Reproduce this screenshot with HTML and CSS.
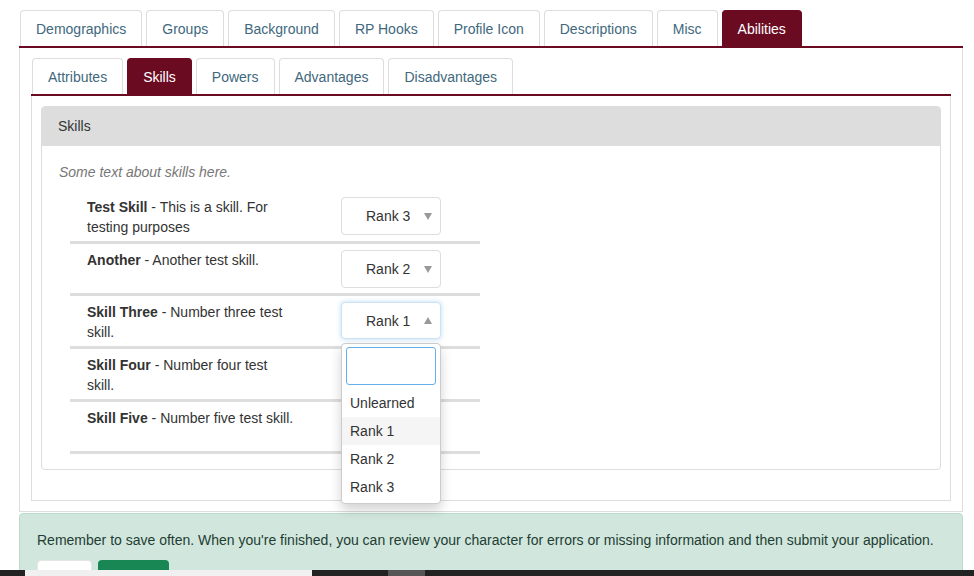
FILE: index.html
```html
<!DOCTYPE html>
<html>
<head>
<meta charset="utf-8">
<link rel="stylesheet" href="styles.css">
</head>
<body>
<div class="page">
  <ul class="tabs">
    <li class="tab">Demographics</li>
    <li class="tab">Groups</li>
    <li class="tab">Background</li>
    <li class="tab">RP Hooks</li>
    <li class="tab">Profile Icon</li>
    <li class="tab">Descriptions</li>
    <li class="tab">Misc</li>
    <li class="tab active">Abilities</li>
  </ul>
  <div class="outer-panel">
    <ul class="tabs">
      <li class="tab">Attributes</li>
      <li class="tab active">Skills</li>
      <li class="tab">Powers</li>
      <li class="tab">Advantages</li>
      <li class="tab">Disadvantages</li>
    </ul>
    <div class="inner-panel">
      <div class="card">
        <div class="card-head">Skills</div>
        <div class="card-body">
          <p class="intro">Some text about skills here.</p>
          <div class="skill-list">
            <div class="skill">
              <div class="label"><b>Test Skill</b> - This is a skill. For testing purposes</div>
              <div class="select"><span>Rank 3</span><i class="caret"></i></div>
            </div>
            <div class="skill">
              <div class="label"><b>Another</b> - Another test skill.</div>
              <div class="select"><span>Rank 2</span><i class="caret"></i></div>
            </div>
            <div class="skill">
              <div class="label"><b>Skill Three</b> - Number three test skill.</div>
              <div class="select-wrap">
                <div class="select focused"><span>Rank 1</span><i class="caret up"></i></div>
                <div class="dropdown">
                  <div class="search"></div>
                  <div class="opt">Unlearned</div>
                  <div class="opt hover">Rank 1</div>
                  <div class="opt">Rank 2</div>
                  <div class="opt">Rank 3</div>
                </div>
              </div>
            </div>
            <div class="skill">
              <div class="label"><b>Skill Four</b> - Number four test skill.</div>
              <div class="select"><span>Rank 1</span><i class="caret"></i></div>
            </div>
            <div class="skill">
              <div class="label"><b>Skill Five</b> - Number five test skill.</div>
              <div class="select"><span>Rank 1</span><i class="caret"></i></div>
            </div>
          </div>
        </div>
      </div>
    </div>
  </div>
  <div class="alert">
    <p>Remember to save often. When you're finished, you can review your character for errors or missing information and then submit your application.</p>
    <div class="buttons">
      <span class="btn btn-light"></span>
      <span class="btn btn-green"></span>
    </div>
  </div>
</div>
<div class="bottom-bar">
  <span class="seg-light"></span>
  <span class="seg-gap"></span>
  <span class="seg-gray"></span>
</div>
</body>
</html>
```
FILE: styles.css
```css
* { box-sizing: border-box; }
html, body { margin: 0; padding: 0; background: #fff; }
body {
  font-family: "Liberation Sans", Arial, sans-serif;
  font-size: 14px;
  line-height: 20px;
  color: #333;
  overflow: hidden;
  height: 576px;
}
.page { padding: 10px 11px 0 19px; }

.tabs {
  list-style: none;
  margin: 0;
  padding: 0 0 0 1px;
  display: flex;
  gap: 4px;
  border-bottom: 2px solid #6b0b22;
}
.tab {
  height: 36px;
  padding: 8px 15px;
  border: 1px solid #ddd;
  border-bottom: none;
  border-radius: 4px 4px 0 0;
  color: #41687d;
  background: #fff;
  white-space: nowrap;
}
.tab.active {
  background: #6b0b22;
  border-color: #6b0b22;
  color: #fff;
}

.outer-panel {
  border: 1px solid #ddd;
  border-top: none;
  padding: 10px 11px 10px 11px;
}
.inner-panel {
  border: 1px solid #ddd;
  border-top: none;
  padding: 10px 9px 30px 9px;
}

.card {
  border: 1px solid #ddd;
  border-radius: 4px;
}
.card-head {
  background: #ddd;
  height: 39px;
  padding: 9px 16px 10px;
}
.card-body { padding: 16px 17px 15px 17px; }
.intro {
  margin: 0 0 9px 0;
  font-style: italic;
  color: #777;
}
.skill-list {
  margin-left: 11px;
  width: 410px;
}
.skill {
  display: flex;
  align-items: flex-start;
  padding: 6px 0 4px 17px;
  border-bottom: 3px solid #ddd;
  min-height: 52px;
}
.label {
  width: 210px;
  margin-right: 44px;
}
.select-wrap { position: relative; }
.select {
  position: relative;
  width: 100px;
  height: 38px;
  border: 1px solid #ddd;
  border-radius: 4px;
  background: #fff;
  padding: 8px 0 0 24px;
}
.select.focused {
  height: 37px;
  border-color: #cfe2f1;
  box-shadow: 0 0 5px rgba(102, 175, 233, 0.45);
}
.caret {
  position: absolute;
  right: 8px;
  top: 15px;
  width: 0;
  height: 0;
  border-left: 4px solid transparent;
  border-right: 4px solid transparent;
  border-top: 7px solid #999;
}
.caret.up {
  border-top: none;
  border-bottom: 7px solid #999;
  top: 14px;
}
.dropdown {
  position: absolute;
  left: 0;
  top: 41px;
  width: 100px;
  background: #fff;
  border: 1px solid #ccc;
  border-radius: 4px;
  box-shadow: 0 6px 12px rgba(0, 0, 0, 0.175);
  z-index: 5;
  padding-bottom: 2px;
}
.search {
  margin: 3px 4px 4px 4px;
  height: 38px;
  border: 1px solid #66afe9;
  border-radius: 3px;
}
.opt {
  height: 28px;
  padding: 4px 8px;
  color: #333;
}
.opt.hover { background: #f5f5f5; }

.alert {
  margin-top: 1px;
  background: #d1e7dd;
  border: 1px solid #badbcc;
  border-radius: 4px;
  padding: 16px 17px 15px;
  color: #1f3d33;
}
.alert p { margin: 0 0 10px 0; }
.buttons { display: flex; gap: 6px; }
.btn {
  display: inline-block;
  height: 34px;
  border-radius: 4px;
}
.btn-light { width: 55px; background: #fff; border: 1px solid #e6e6e6; }
.btn-green { width: 71px; background: #198754; }

.bottom-bar {
  position: fixed;
  left: 0;
  right: 0;
  bottom: 0;
  height: 6px;
  background: #222;
  display: flex;
  padding-left: 25px;
}
.seg-light { width: 287px; background: #f0f0f0; }
.seg-gap { width: 76px; }
.seg-gray { width: 37px; background: #555; }
```
